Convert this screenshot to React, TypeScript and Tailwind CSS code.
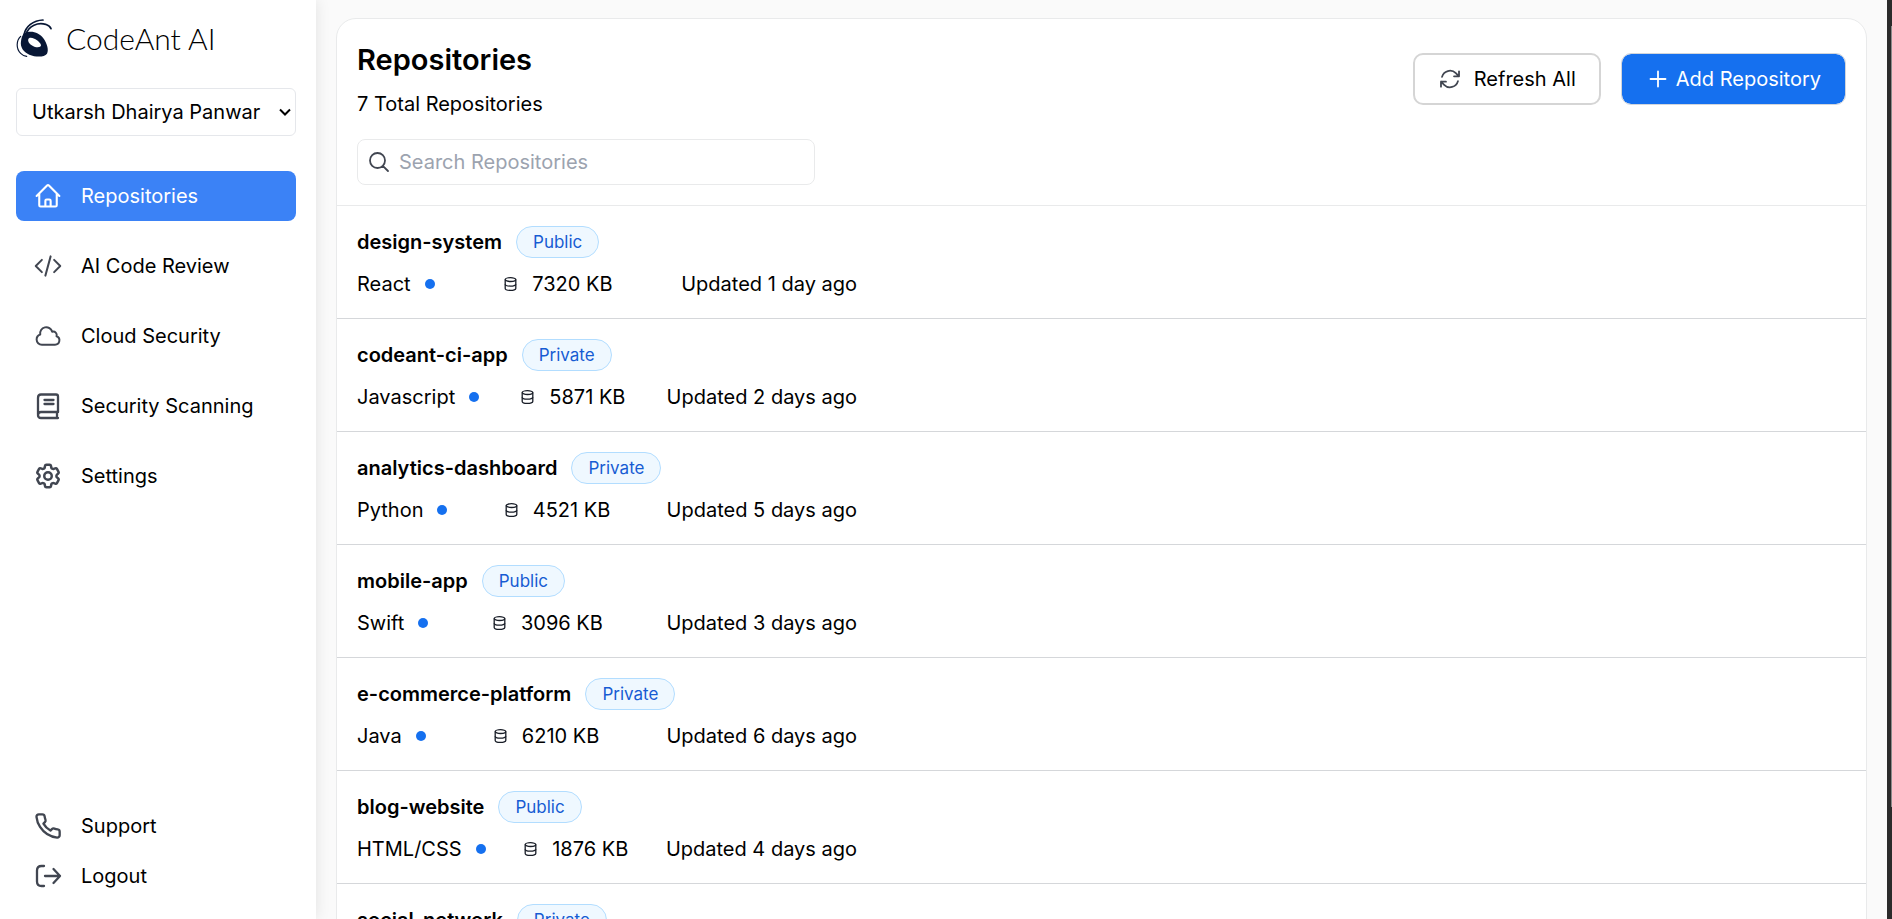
import { useState } from "react";
import type { ReactNode } from "react";
import {
  HiOutlineArrowPath,
  HiOutlineCloud,
  HiOutlineCodeBracket,
  HiOutlineCog6Tooth,
  HiOutlineHome,
  HiOutlineMagnifyingGlass,
  HiOutlinePlus,
} from "react-icons/hi2";
import { FiPhone } from "react-icons/fi";

type Repo = {
  name: string;
  visibility: "Public" | "Private";
  language: string;
  size: string;
  updated: string;
};

const repos: Repo[] = [
  { name: "design-system", visibility: "Public", language: "React", size: "7320 KB", updated: "Updated 1 day ago" },
  { name: "codeant-ci-app", visibility: "Private", language: "Javascript", size: "5871 KB", updated: "Updated 2 days ago" },
  { name: "analytics-dashboard", visibility: "Private", language: "Python", size: "4521 KB", updated: "Updated 5 days ago" },
  { name: "mobile-app", visibility: "Public", language: "Swift", size: "3096 KB", updated: "Updated 3 days ago" },
  { name: "e-commerce-platform", visibility: "Private", language: "Java", size: "6210 KB", updated: "Updated 6 days ago" },
  { name: "blog-website", visibility: "Public", language: "HTML/CSS", size: "1876 KB", updated: "Updated 4 days ago" },
  { name: "social-network", visibility: "Private", language: "PHP", size: "5432 KB", updated: "Updated 7 days ago" },
];

function Logo() {
  return (
    <svg viewBox="46 54 108 120" className="h-10 w-9" fill="none" stroke="#081735" strokeLinecap="round" aria-hidden="true">
      <path
        d="M70 100C92 90 115 98 128 115C140 131 145 152 139 161C131 172 106 172 86 164C68 157 58 141 61 124C62 114 65 106 70 100ZM83 117C80 126 90 136 101 140C111 143 121 142 121 136C121 129 110 120 101 116C93 113 86 112 83 117Z"
        fill="#081735"
        fillRule="evenodd"
        stroke="none"
      />
      <path d="M70 104C75 80 97 61 127 60" strokeWidth="5" />
      <path d="M76 102C84 77 112 66 135 73C143 76 149 81 151 86" strokeWidth="5" />
      <path d="M60 109C46 122 46 147 60 160C65 165 71 168 78 169" strokeWidth="3.5" />
    </svg>
  );
}

function BookIcon() {
  return (
    <svg viewBox="0 0 28 28" className="size-7" fill="none" stroke="currentColor" strokeWidth="2.3" strokeLinecap="round" strokeLinejoin="round" aria-hidden="true">
      <path d="M24 20V4.500C24 3 23.500 2.500 22 2.500H7C4.500 2.500 4 4 4 6V22" />
      <path d="M24 20H7C5.200 20 4 21.200 4 23S5.200 26 7 26H24M23 20V26" />
      <path d="M10.500 8H19.500M10.500 12H19.500" />
    </svg>
  );
}

function LogoutIcon() {
  return (
    <svg viewBox="0 0 28 28" className="size-7" fill="none" stroke="currentColor" strokeWidth="2.3" strokeLinecap="round" strokeLinejoin="round" aria-hidden="true">
      <path d="M10 4H7.500C4.500 4 3 5.500 3 8.500V19.500C3 22.500 4.500 24 7.500 24H10" />
      <path d="M11 14H26M19.500 7L26 14L19.500 21" />
    </svg>
  );
}

function DatabaseIcon() {
  return (
    <svg viewBox="0 0 15 16" className="h-4 w-[15px]" fill="none" stroke="#181d27" strokeWidth="1.3" aria-hidden="true">
      <ellipse cx="7.500" cy="3.600" rx="5.300" ry="1.900" />
      <path d="M2.200 3.600V12.500C2.200 13.600 4.500 14.400 7.500 14.400S12.800 13.600 12.800 12.500V3.600" />
      <path d="M2.200 8.200C2.200 9.300 4.500 10.100 7.500 10.100S12.800 9.300 12.800 8.200" />
    </svg>
  );
}

function NavItem({ icon, label, active = false }: { icon: ReactNode; label: string; active?: boolean }) {
  return (
    <li>
      <a
        href="#"
        aria-current={active ? "page" : undefined}
        className={
          active
            ? "flex h-[50px] items-center gap-[19px] rounded-lg bg-[#3b82f6] px-[18px] text-white"
            : "flex h-[50px] items-center gap-[19px] rounded-lg px-[18px] text-black"
        }
      >
        <span className={active ? "flex size-7 items-center justify-center text-white" : "flex size-7 items-center justify-center text-[#414651]"}>
          {icon}
        </span>
        {label}
      </a>
    </li>
  );
}

function Sidebar() {
  return (
    <aside className="z-10 flex w-[316px] shrink-0 flex-col bg-white pt-[18px] pr-5 pb-[18px] pl-4 shadow-[0_0_14px_rgba(0,0,0,0.1)]">
      <div className="flex items-center gap-[14px]">
        <Logo />
        <span className="font-[Lato,sans-serif] text-[30px] leading-10 font-light">CodeAnt AI</span>
      </div>
      <div className="relative mt-[30px]">
        <select
          aria-label="Account"
          className="h-12 w-full appearance-none rounded-md border border-gray-200 bg-white pr-8 pl-[15px] text-black"
        >
          <option>Utkarsh Dhairya Panwar</option>
        </select>
        <svg viewBox="0 0 12 8" className="pointer-events-none absolute top-5 right-[5px] h-2 w-3" fill="none" stroke="black" strokeWidth="2" aria-hidden="true">
          <path d="M1 1.500L6 6.500L11 1.500" />
        </svg>
      </div>
      <nav className="mt-[35px] flex grow flex-col justify-between">
        <ul className="flex flex-col gap-5">
          <NavItem active icon={<HiOutlineHome className="size-7" strokeWidth={1.8} />} label="Repositories" />
          <NavItem icon={<HiOutlineCodeBracket className="size-7" strokeWidth={1.7} />} label="AI Code Review" />
          <NavItem icon={<HiOutlineCloud className="size-7" strokeWidth={1.7} />} label="Cloud Security" />
          <NavItem icon={<BookIcon />} label="Security Scanning" />
          <NavItem icon={<HiOutlineCog6Tooth className="size-[30px] shrink-0" strokeWidth={2} />} label="Settings" />
        </ul>
        <ul>
          <NavItem icon={<FiPhone className="size-7" />} label="Support" />
          <NavItem icon={<LogoutIcon />} label="Logout" />
        </ul>
      </nav>
    </aside>
  );
}

function RepoRow({ repo }: { repo: Repo }) {
  return (
    <li className="border-b border-[#d5d7da] p-5">
      <div className="flex items-center gap-[14px]">
        <h2 className="font-semibold">{repo.name}</h2>
        <span className="flex h-8 items-center rounded-full border border-[#b2ddff] bg-[#eff8ff] px-4 text-[17px] text-[#175cd3]">
          {repo.visibility}
        </span>
      </div>
      <div className="mt-3 flex w-[500px] items-center justify-between leading-7">
        <span className="flex items-center gap-[14px]">
          {repo.language}
          <span className="size-[10px] rounded-full bg-[#1570ef]" />
        </span>
        <span className="flex items-center gap-[14px]">
          <DatabaseIcon />
          {repo.size}
        </span>
        <span>{repo.updated}</span>
      </div>
    </li>
  );
}

export default function App() {
  const [query, setQuery] = useState("");
  const shown = repos.filter((repo) => repo.name.includes(query.toLowerCase()));

  return (
    <div className="flex h-screen overflow-hidden bg-[#fafafa] font-[Inter,sans-serif] text-[20px] leading-7 text-black">
      <Sidebar />
      <main className="grow overflow-y-auto px-5 pt-[18px] pb-5 [scrollbar-width:none]">
        <section className="overflow-hidden rounded-[20px] border border-[#e9eaeb] bg-white">
          <header className="border-b border-[#e9eaeb] px-5 pt-[23px] pb-5">
            <div className="flex items-start justify-between">
              <div>
                <h1 className="text-[29px] leading-9 font-semibold">Repositories</h1>
                <p className="mt-3">{repos.length} Total Repositories</p>
              </div>
              <div className="mt-[11px] flex items-center gap-5">
                <button type="button" className="flex h-[52px] items-center gap-3 rounded-[10px] border-2 border-[#d5d5d5] bg-white px-[23px]">
                  <HiOutlineArrowPath className="size-6 text-[#414651]" strokeWidth={1.8} />
                  Refresh All
                </button>
                <button type="button" className="flex h-[52px] items-center gap-[6px] rounded-[10px] border border-[#d1d5db] bg-[#1570ef] bg-clip-padding px-6 text-white">
                  <HiOutlinePlus className="size-6" strokeWidth={1.8} />
                  Add Repository
                </button>
              </div>
            </div>
            <label className="mt-[21px] flex h-[46px] w-[458px] items-center gap-2 rounded-lg border border-[#e9eaeb] px-[9px]">
              <HiOutlineMagnifyingGlass className="size-6 shrink-0 text-[#414651]" strokeWidth={1.8} />
              <input
                type="search"
                aria-label="Search Repositories"
                placeholder="Search Repositories"
                value={query}
                onChange={(event) => setQuery(event.target.value)}
                className="w-full bg-transparent outline-none placeholder:text-[#9ca3af]"
              />
            </label>
          </header>
          <ul>
            {shown.map((repo) => (
              <RepoRow key={repo.name} repo={repo} />
            ))}
          </ul>
        </section>
      </main>
      <div className="flex w-[5px] shrink-0 justify-end bg-[#2b2b2b] pt-[26px] pb-28" aria-hidden="true">
        <span className="w-px bg-[#8a8a8a]" />
      </div>
    </div>
  );
}
